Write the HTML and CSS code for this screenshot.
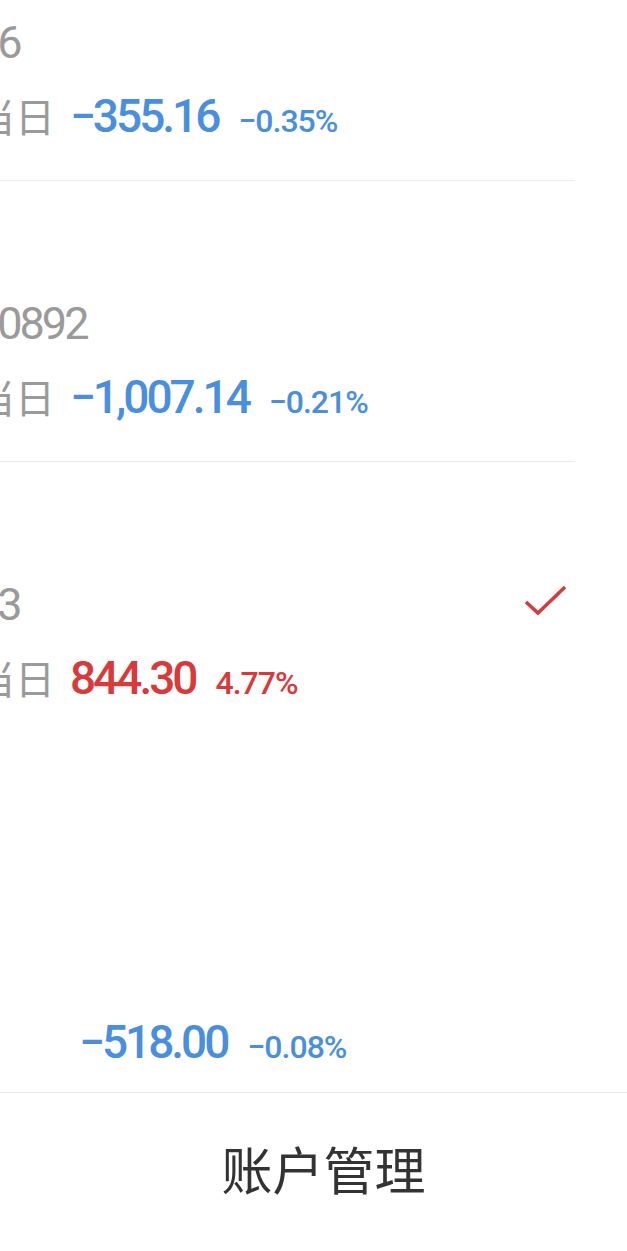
FILE: index.html
```html
<!DOCTYPE html>
<html lang="zh-CN">
<head>
    <meta charset="UTF-8">
    <meta name="viewport" content="width=device-width, initial-scale=1.0">
    <title>账户选择</title>
    <link rel="stylesheet" href="styles.css">
</head>
<body>
<!-- account list -------------------------------------------------->
<div class="sheet">
    <div class="account">
        <div class="account-name">26</div>
        <div class="today">
            <span class="today-label">当日</span>
            <span class="today-value down">−355.16</span>
            <span class="today-pct down">−0.35%</span>
        </div>
    </div>

    <div class="account">
        <div class="account-name">50892</div>
        <div class="today">
            <span class="today-label">当日</span>
            <span class="today-value down">−1,007.14</span>
            <span class="today-pct down">−0.21%</span>
        </div>
    </div>

    <div class="account account-current">
        <div class="account-name">
            <span>13</span>
            <svg class="check" width="44" height="32" viewBox="0 0 44 32">
                <polyline points="2,17 14,28 41,2" fill="none" stroke="#d8393a" stroke-width="3.5"/>
            </svg>
        </div>
        <div class="today">
            <span class="today-label">当日</span>
            <span class="today-value up">844.30</span>
            <span class="today-pct up">4.77%</span>
        </div>
    </div>

    <div class="total">
        <div class="today">
            <span class="today-value down">−518.00</span>
            <span class="today-pct down">−0.08%</span>
        </div>
    </div>
</div>

<!-- bottom action -------------------------------------------------->
<div class="manage">账户管理</div>
</body>
</html>
```

FILE: styles.css
```css
body {
  margin: 0;
  background-color: #fff;
  font-family: Roboto, "Noto Sans CJK SC", sans-serif;
  overflow: hidden;
}

/* list is scrolled a bit, first row and left edge are cut */
.sheet {
  margin-top: -100px;
  margin-left: -25px;
}

.account {
  margin-right: 52px;
  padding: 119px 0 37px;
  border-bottom: 1px solid #ebebeb;
}
.account-current {
  border-bottom: none;
}

.account-name {
  display: flex;
  justify-content: space-between;
  align-items: flex-start;
  height: 48px;
  line-height: 48px;
  margin-bottom: 20px;
  font-size: 45px;
  letter-spacing: -3px;
  color: #9a9a9a;
}
.check {
  margin-top: 4px;
  margin-right: 7px;
}

.today {
  height: 56px;
  line-height: 56px;
  white-space: nowrap;
}
.today-label {
  margin-right: 11px;
  font-family: "Noto Sans CJK SC", sans-serif;
  font-size: 40px;
  color: #9a9a9a;
}
.today-value {
  font-size: 46px;
  font-weight: 500;
  letter-spacing: -3px;
}
.today-pct {
  margin-left: 16px;
  font-size: 32px;
  font-weight: 500;
  letter-spacing: -1px;
}
.down {
  color: #4a8fdd;
}
.up {
  color: #d8393a;
}

.total {
  padding: 272px 0 22px 104px;
}

.manage {
  display: flex;
  align-items: center;
  justify-content: center;
  height: 158px;
  padding: 0 0 6px 20px;
  box-sizing: border-box;
  border-top: 1px solid #e8e8e8;
  font-family: "Noto Sans CJK SC", sans-serif;
  font-size: 51px;
  line-height: 1;
  color: #333;
}
```
